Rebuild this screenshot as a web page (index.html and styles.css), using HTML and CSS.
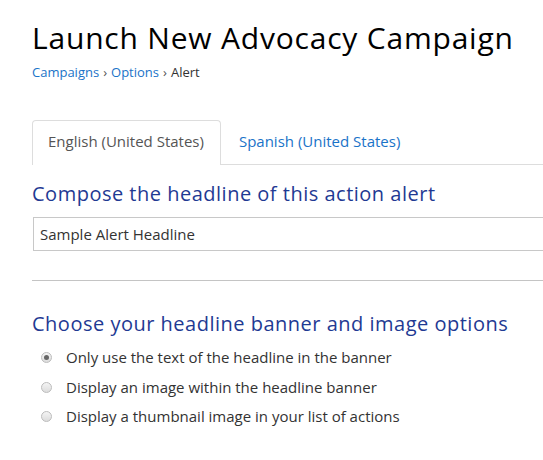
FILE: index.html
```html
<!DOCTYPE html>
<html>
<head>
<meta charset="utf-8">
<link rel="stylesheet" href="styles.css">
</head>
<body>
<div class="page">
  <h1 class="title">Launch New Advocacy Campaign</h1>
  <nav class="crumbs"><a>Campaigns</a><span class="sep">›</span><a>Options</a><span class="sep">›</span><span class="cur">Alert</span></nav>
  <div class="tabs">
    <div class="tab active">English (United States)</div>
    <div class="tab">Spanish (United States)</div>
  </div>
  <h2 class="section">Compose the headline of this action alert</h2>
  <div class="input">Sample Alert Headline</div>
  <hr class="rule">
  <h2 class="section second">Choose your headline banner and image options</h2>
  <ul class="radios">
    <li><span class="radio checked"></span>Only use the text of the headline in the banner</li>
    <li><span class="radio"></span>Display an image within the headline banner</li>
    <li><span class="radio"></span>Display a thumbnail image in your list of actions</li>
  </ul>
</div>
</body>
</html>
```
FILE: styles.css
```css
html, body { margin: 0; padding: 0; background: #fff; }
body { font-family: "Open Sans", "Noto Sans", sans-serif; color: #333; overflow: hidden; }
.page { padding: 18px 0 0 32px; }
.title { font-weight: 400; font-size: 30px; line-height: 40px; margin: 0; color: #000; letter-spacing: 0.8px; }
.crumbs { font-size: 13px; margin-top: 5px; line-height: 18px; color: #333; }
.crumbs a { color: #1a73c8; }
.sep { margin: 0 4px; color: #555; }
.tabs { display: flex; margin-top: 39px; border-bottom: 1px solid #ddd; }
.tab { font-size: 15px; padding: 10px 16px 11px 15px; margin-right: 2px; color: #1a73c8; line-height: 21px; border: 1px solid transparent; border-bottom: none; border-radius: 4px 4px 0 0; margin-bottom: -1px; }
.tab.active { color: #555; border-color: #ddd; background: #fff; padding-bottom: 13px; }
.section { font-weight: 400; font-size: 20px; color: #1f3a93; margin: 15px 0 0; line-height: 28px; letter-spacing: 0.5px; }
.input { margin-top: 9px; margin-left: 1px; border: 1px solid #c8c8c8; border-right: none; height: 32px; line-height: 32px; padding-left: 6px; font-size: 15px; color: #333; }
.rule { border: none; border-top: 1px solid #c4c4c4; margin: 29px 0 0 0; }
.section.second { margin-top: 29px; }
.radios { list-style: none; margin: 5px 0 0; padding: 0 0 0 9px; }
.radios li { display: flex; align-items: center; font-size: 15px; line-height: 29.5px; height: 29.5px; }
.radio { width: 11px; height: 11px; border-radius: 50%; border: 1px solid #bcbcbc; background: linear-gradient(#f4f4f4, #dcdcdc); margin-right: 14px; box-sizing: border-box; position: relative; }
.radio.checked::after { content: ""; position: absolute; left: 2px; top: 2px; width: 5px; height: 5px; border-radius: 50%; background: #666; }
```
